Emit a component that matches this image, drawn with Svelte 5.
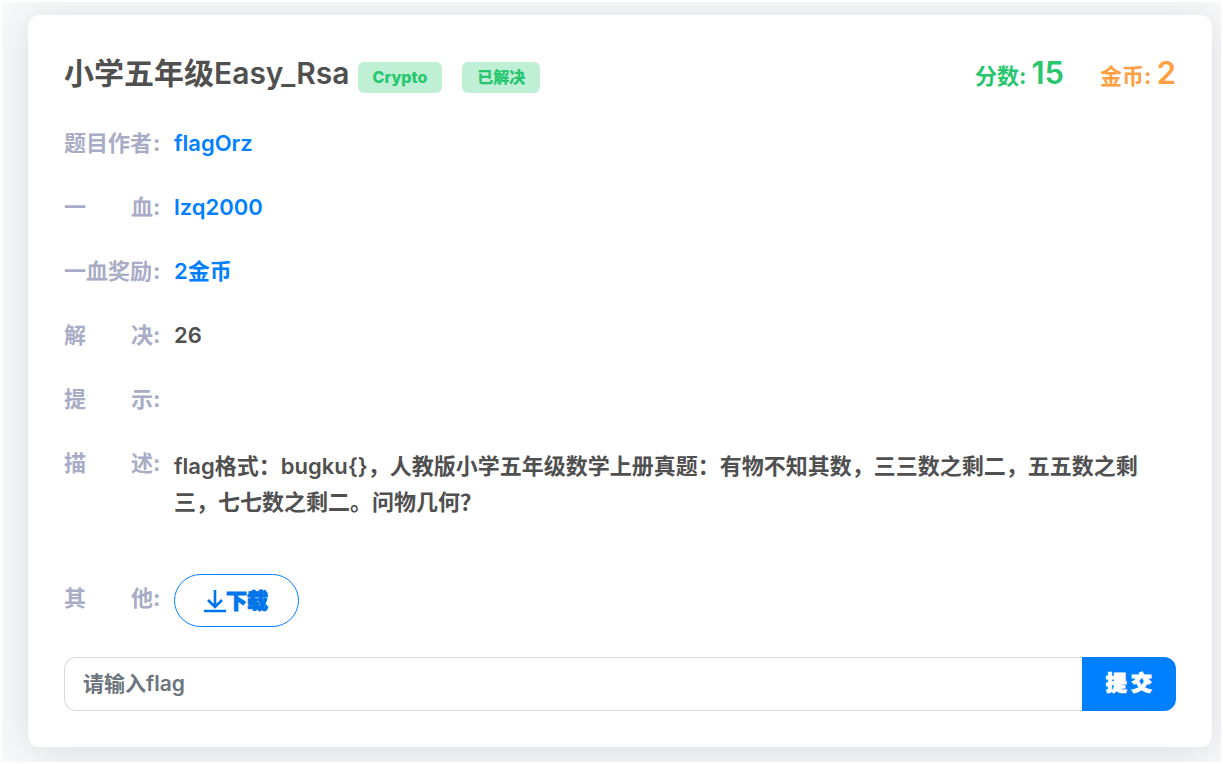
<script>
  const title = "小学五年级Easy_Rsa";
  const tags = ["Crypto", "已解决"];
  const info = [
    { label: ["题目作者"], value: "flagOrz", link: true },
    { label: ["一", "血"], value: "lzq2000", link: true },
    { label: ["一血奖励"], value: "2金币", link: true },
    { label: ["解", "决"], value: "26" },
    { label: ["提", "示"], value: "" },
  ];
  const description =
    "flag格式：bugku{}，人教版小学五年级数学上册真题：有物不知其数，三三数之剩二，五五数之剩三，七七数之剩二。问物几何？";

  let flag = $state("");
</script>

{#snippet rowLabel(parts)}
  <dt>
    <span class="parts">
      {#each parts as part}<span>{part}</span>{/each}
    </span>:
  </dt>
{/snippet}

<main class="page">
  <section class="card">
    <header>
      <h1>{title}</h1>
      <div class="tags">
        {#each tags as tag}
          <span class="tag">{tag}</span>
        {/each}
      </div>
      <div class="stats">
        <span class="score">分数: <b>15</b></span>
        <span class="coins">金币: <b>2</b></span>
      </div>
    </header>

    <dl>
      {#each info as row}
        <div class="row">
          {@render rowLabel(row.label)}
          <dd>
            {#if row.link}<a href="#top">{row.value}</a>{:else}{row.value}{/if}
          </dd>
        </div>
      {/each}
      <div class="row description">
        {@render rowLabel(["描", "述"])}
        <dd>{description}</dd>
      </div>
      <div class="row other">
        {@render rowLabel(["其", "他"])}
        <dd>
          <a class="download" href="#download">
            <svg viewBox="0 0 22 24" aria-hidden="true">
              <path d="M11 1v16M4 11l7 7 7-7M0 22h22" />
            </svg>下载
          </a>
        </dd>
      </div>
    </dl>

    <form onsubmit={(e) => e.preventDefault()}>
      <input
        type="text"
        aria-label="flag"
        placeholder="请输入flag"
        bind:value={flag}
      />
      <button type="submit">提 交</button>
    </form>
  </section>
</main>

<style>
  :global(body) {
    background: #fff;
  }

  .page {
    display: flow-root;
    margin: 2px;
    background: #f8f9fb;
    overflow: hidden;
    color: #505050;
    font-family: Inter, "Noto Sans CJK SC", sans-serif;
    font-size: 22px;
    font-weight: 700;
    line-height: 32px;
  }

  .card {
    margin: 13px 9px 15px 26px;
    padding: 36px;
    border-radius: 12px;
    background: #fff;
    box-shadow: 0 4px 40px rgba(34, 41, 47, 0.14);
  }

  header {
    display: flex;
    align-items: center;
    height: 44px;
    margin-bottom: 32px;
  }

  h1 {
    margin: 0;
    font-size: 30px;
    font-weight: 600;
    line-height: 42px;
  }

  .tags {
    display: flex;
    gap: 20px;
    margin: 8px 0 0 8px;
  }

  .tag {
    padding: 0 15px;
    border-radius: 6px;
    background: #bfefd5;
    color: #28c76f;
    font-size: 16px;
    font-weight: 800;
    line-height: 31px;
  }

  .stats {
    display: flex;
    gap: 36px;
    margin: 3px 0 0 auto;
  }

  .stats b {
    font-size: 31px;
    font-weight: 600;
  }

  .score {
    color: #28c76f;
  }

  .coins {
    color: #ff9f43;
  }

  dl {
    margin: 0;
  }

  .row {
    display: flex;
    margin-bottom: 32px;
  }

  dt {
    display: flex;
    flex: none;
    width: 110px;
    color: #a9acc6;
    white-space: nowrap;
  }

  .parts {
    display: flex;
    justify-content: space-between;
    width: 89px;
  }

  dd {
    margin: 0;
    font-weight: 600;
  }

  a {
    color: #0080ff;
    text-decoration: none;
  }

  .description {
    margin-bottom: 54px;
  }

  .description dd {
    padding: 1px 36px 0 0;
    line-height: 36px;
  }

  .other {
    margin-bottom: 30px;
  }

  .other dt {
    line-height: 48px;
  }

  .download {
    display: flex;
    align-items: center;
    padding: 0 30px 0 29px;
    border: 1px solid #0080ff;
    border-radius: 27px;
    color: #0075ea;
    font-size: 21px;
    font-weight: 900;
    line-height: 51px;
    -webkit-text-stroke: 1px currentColor;
  }

  .download svg {
    width: 22px;
    height: 24px;
    fill: none;
    stroke: currentColor;
    stroke-width: 2.6;
  }

  form {
    display: flex;
    height: 54px;
  }

  input,
  button {
    box-sizing: border-box;
    font-family: inherit;
    font-size: 21px;
  }

  input {
    flex: 1;
    min-width: 0;
    padding: 0 18px 2px;
    border: 1px solid #d9d9d9;
    border-right: 0;
    border-radius: 12px 0 0 12px;
    color: #505050;
    font-weight: 600;
  }

  input::placeholder {
    color: #6c757d;
    opacity: 1;
  }

  button {
    padding: 0 24px 6px;
    border: 0;
    border-radius: 0 12px 12px 0;
    background: #0080ff;
    color: #fff;
    font-weight: 900;
    -webkit-text-stroke: 1px currentColor;
  }
</style>
